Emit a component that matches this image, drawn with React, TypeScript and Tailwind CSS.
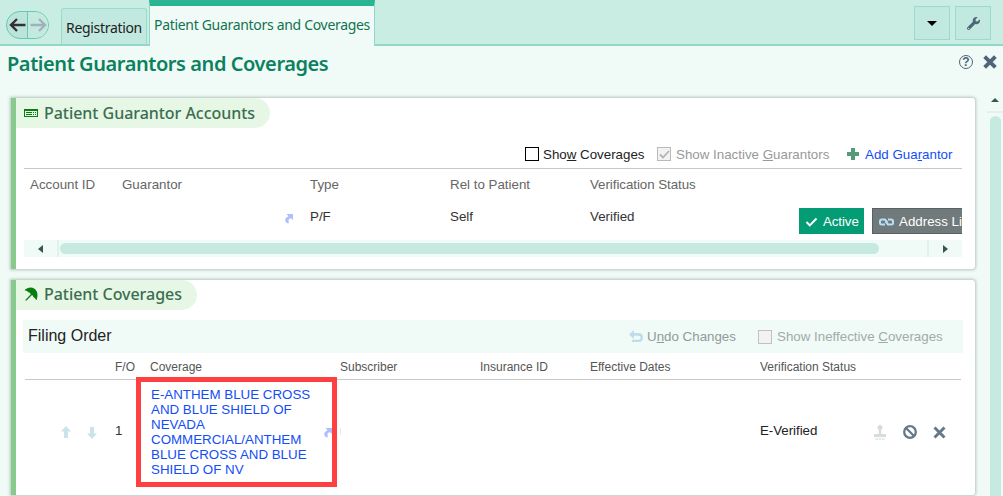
import type { ReactNode } from "react";

const ShortcutIcon = ({ className = "" }: { className?: string }) => (
  <svg className={`shrink-0 ${className}`} width="8" height="10" viewBox="0 0 8 10">
    <path d="M1.500 0H8V6L6 4.300C3.800 4.600 2.900 6 3.900 8.300L3.300 9.500C-.3 8.500-.8 5 2 3.300L3.500 2.200Z" fill="#aebffa" />
  </svg>
);

const CrossIcon = ({ size, color, width }: { size: number; color: string; width: number }) => (
  <svg className="shrink-0" width={size} height={size} viewBox="0 0 12 12">
    <path d="M1.400 1.400l9.200 9.200M10.600 1.400l-9.200 9.200" stroke={color} strokeWidth={width} />
  </svg>
);

function Card({ className, icon, title, titleClass, children }: { className: string; icon: ReactNode; title: string; titleClass: string; children: ReactNode }) {
  return (
    <section className={`ml-[11px] w-[964px] rounded-r-[3px] border-l-[5px] border-[#88c98c] bg-white shadow-[0_0_3px_1px_rgba(110,130,125,0.45)] ${className}`}>
      <h2 className={`flex h-[30px] items-center rounded-r-full bg-[#e6f7e6] pl-2 font-['Noto_Sans'] text-[16px] font-medium tracking-[-0.04px] whitespace-nowrap text-[#3b6e50] ${titleClass}`}>
        {icon}
        <span>{title}</span>
      </h2>
      {children}
    </section>
  );
}

export default function App() {
  return (
    <div className="flex h-[496px] w-[1003px] flex-col overflow-hidden bg-[#f0faf7] font-['Liberation_Sans',sans-serif] text-[13.33px] text-[#333]">
      <header className="flex h-[46px] shrink-0 border-b-2 border-[#92d8c5] bg-[#c9ede2]">
        <div className="mt-[11px] ml-[6px] flex h-[28px] w-[43px] overflow-hidden rounded-full border border-[#62cbb0] bg-[#bce4da]">
          <div className="flex w-[21px] items-center justify-center border-r border-[#62cbb0]">
            <svg width="17" height="14" viewBox="0 0 17 14" fill="none" stroke="#333" strokeWidth="2.4"><path d="M16.5 7H2M8 1L2 7l6 6" /></svg>
          </div>
          <div className="flex flex-1 items-center justify-center bg-[#c4eade]">
            <svg width="17" height="14" viewBox="0 0 17 14" fill="none" stroke="#9eb2bd" strokeWidth="2.4"><path d="M.5 7H15M9 1l6 6-6 6" /></svg>
          </div>
        </div>
        <div className="mt-2 ml-3 flex h-[36px] w-[86px] items-center justify-center rounded-t-[3px] border border-b-0 border-[#98dcca] bg-[#c1e9df] pt-[2px] font-['Noto_Sans'] text-[14px] tracking-[-0.32px] whitespace-nowrap text-[#222]">Registration</div>
        <div className="ml-[2px] flex h-[46px] w-[226px] shrink-0 justify-center border-x border-t-[6px] border-x-[#92d8c5] border-t-[#2ab592] bg-[#f0faf7] pt-[8px] font-['Noto_Sans'] text-[14px] tracking-[-0.31px] whitespace-nowrap text-[#13724f]">Patient Guarantors and Coverages</div>
        <div className="mt-[6px] mr-3 ml-auto flex h-[34px] gap-[5px]">
          <div className="flex w-9 items-center justify-center border border-[#98dcca] bg-[#c1e9df]">
            <svg width="10" height="5" viewBox="0 0 10 5"><path d="M0 0h10L5 5Z" fill="#000" /></svg>
          </div>
          <div className="flex w-9 items-center justify-center border border-[#98dcca] bg-[#c1e9df]">
            <svg width="13" height="13" viewBox="0 0 512 512" fill="#4f6578"><path d="M507.7 109.1c-2.2-9-13.5-12.1-20.1-5.5l-74.4 74.4-67.9-11.3L334 98.9l74.4-74.4c6.6-6.6 3.4-17.9-5.7-20.2-47.4-11.7-99.6.9-136.6 37.9-39.6 39.6-50.5 97.1-34.1 147.2L18.7 402.8c-25 25-25 65.5 0 90.5s65.5 25 90.5 0l213.2-213.2c50.1 16.7 107.5 5.7 147.4-34.2 37.1-37.1 49.7-89.3 37.9-136.8ZM64 472a24 24 0 1 1 0-48 24 24 0 0 1 0 48Z" /></svg>
          </div>
        </div>
      </header>

      <div className="flex h-[52px] shrink-0">
        <h1 className="mt-[3px] ml-[7px] font-['Noto_Sans'] text-[20px] leading-[30px] font-semibold tracking-[-0.43px] whitespace-nowrap text-[#0b8160]">Patient Guarantors and Coverages</h1>
        <div className="mt-[9px] mr-[6px] ml-auto flex h-[14px] items-center gap-[10px]">
          <div className="flex h-[14px] w-[14px] items-center justify-center rounded-full border border-[#4f6578] text-[12px] leading-none font-bold text-[#4f6578]">?</div>
          <CrossIcon size={14} color="#4f6578" width={3.3} />
        </div>
      </div>

      <div className="flex min-h-0 flex-1">
        <main className="w-[987px] shrink-0">
          <Card
            className="h-[171px]"
            title="Patient Guarantor Accounts"
            titleClass="w-[254px]"
            icon={
              <svg className="mr-[6px] shrink-0" width="14" height="8" viewBox="0 0 14 8" fill="none" stroke="#087d12" shapeRendering="crispEdges">
                <path d="M.5 .5h13v7H.5ZM1 1.5h12M2 3.5h6M2 5.5h6M9 3.5h1M11 3.5h1M9 5.5h1M11 5.5h1" />
              </svg>
            }
          >
            <div className="mr-[13px] ml-2 flex h-[41px] items-end border-b border-[#c8c8c8] pb-[7px] leading-[15px] whitespace-nowrap">
              <span className="ml-[501px] h-[14px] w-[14px] border border-black bg-white" />
              <span className="-mb-px ml-1 w-[114px] text-[#222]">Sho<u>w</u> Coverages</span>
              <span className="flex h-[14px] w-[14px] items-center justify-center border border-[#bababa] bg-[#f2f2f2]">
                <svg width="11" height="9" viewBox="0 0 11 9"><path d="M1 4.5l3 3L10 1" fill="none" stroke="#b4b4b4" strokeWidth="1.8" /></svg>
              </span>
              <span className="-mb-px ml-[5px] w-[171px] text-[#999]">Show Inactive <u>G</u>uarantors</span>
              <svg className="mb-[1px] shrink-0" width="12" height="12" viewBox="0 0 12 12"><path d="M4 0h4v4h4v4H8v4H4V8H0V4h4Z" fill="#559b75" /></svg>
              <span className="-mb-px ml-[6px] text-[#124ef5]">Add Gua<u>r</u>antor</span>
            </div>
            <div className="ml-[14px] flex h-[30px] items-center pt-[2px] whitespace-nowrap text-[#666]">
              <span className="w-[92px]">Account ID</span>
              <span className="w-[188px]">Guarantor</span>
              <span className="w-[140px]">Type</span>
              <span className="w-[140px]">Rel to Patient</span>
              <span className="tracking-[-0.05px]">Verification Status</span>
            </div>
            <div className="mr-[13px] ml-2 flex h-[41px] pt-[9px] whitespace-nowrap">
              <ShortcutIcon className="mt-[6px] ml-[261px]" />
              <span className="mt-px ml-[17px] w-[140px] shrink-0 leading-[15px]">P/F</span>
              <span className="mt-px w-[140px] shrink-0 leading-[15px]">Self</span>
              <span className="mt-px w-[209px] shrink-0 leading-[15px]">Verified</span>
              <span className="flex h-[26px] w-[65px] shrink-0 items-center bg-[#049c75] pt-px pl-[6px] tracking-[-0.1px] text-white">
                <svg className="mr-[5px] shrink-0" width="13" height="10" viewBox="0 0 12 10"><path d="M1 5l3.3 3.4L11 1.5" fill="none" stroke="#fff" strokeWidth="2" /></svg>
                Active
              </span>
              <span className="ml-2 flex h-[26px] w-[90px] shrink-0 items-center border border-r-0 border-[#596164] bg-[#707a7b] pt-px pl-[6px] text-white">
                <svg className="mr-[5px] shrink-0" width="15" height="8" viewBox="0 0 15 8" fill="none" stroke="#b5e0f5" strokeWidth="2"><path d="M6 6.500H3Q1 6.500 1 5V3Q1 1.500 3 1.500H6L8.500 4.500M9 1.500H12Q14 1.500 14 3V5Q14 6.500 12 6.500H9L6.500 3.500" /></svg>
                Address Li
              </span>
            </div>
            <div className="mr-[13px] ml-2 flex h-[17px] items-center bg-[#f0faf7]">
              <div className="flex h-[17px] w-[35px] items-center justify-center border-r-2 border-[#e0f2ec]"><svg width="5" height="8" viewBox="0 0 5 8"><path d="M5 0v8L0 4Z" fill="#35594e" /></svg></div>
              <div className="ml-[1px] h-[11px] w-[819px] rounded-full bg-[#c6eadf]" />
              <div className="ml-auto flex h-[17px] w-[35px] items-center justify-center border-l-2 border-[#e0f2ec]"><svg width="5" height="8" viewBox="0 0 5 8"><path d="M0 0v8L5 4Z" fill="#35594e" /></svg></div>
            </div>
          </Card>

          <Card
            className="mt-[11px] h-[215px]"
            title="Patient Coverages"
            titleClass="w-[181px] pb-[2px]"
            icon={
              <svg className="mr-[6px] shrink-0" width="14" height="14" viewBox="0 0 14 14">
                <path d="M.8 2.800Q6-1.200 10.500 1.800Q15 5.500 12.700 13L11.800 12.500Q11 10.600 9.500 10.200Q9.200 8.300 7 7.500Q6 5.200 4.300 5.200Q3.500 3.500 1 3.500Z" fill="#087d12" />
                <path d="M8 7L2.500 12.800L1.500 13.200" fill="none" stroke="#087d12" strokeWidth="1.300" />
              </svg>
            }
          >
            <div className="mt-[10px] mr-3 ml-[7px] flex h-[33px] items-center bg-[#f0faf7] whitespace-nowrap">
              <span className="ml-[5px] w-[601px] -translate-y-px text-[16px] leading-[18px] text-[#222]">Filing Order</span>
              <svg width="14" height="13" viewBox="0 0 14 13"><path d="M0 4.500L5 0v3h4.500Q14 3 14 7.500T9.500 12H3v-2.200h6Q11.700 9.800 11.700 7.700T9 5.700H5V9Z" fill="#bfdcea" /></svg>
              <span className="mt-px ml-1 w-[111px] text-[#929b97]">U<u>n</u>do Changes</span>
              <span className="h-[14px] w-[14px] border border-[#c1c1c1] bg-[#f2f2f2]" />
              <span className="mt-px ml-[5px] text-[#a3aaa7]">Show Ineffective <u>C</u>overages</span>
            </div>
            <div className="mr-[14px] ml-[9px] flex h-[27px] items-center border-b border-[#c8c8c8] pt-px text-[12px] whitespace-nowrap text-[#555]">
              <span className="ml-[90px] w-[35px]">F/O</span>
              <span className="w-[190px]">Coverage</span>
              <span className="w-[140px]">Subscriber</span>
              <span className="w-[110px]">Insurance ID</span>
              <span className="w-[170px]">Effective Dates</span>
              <span>Verification Status</span>
            </div>
            <div className="relative flex h-[106px]">
              <div className="absolute top-[-3px] left-[120px] h-[110px] w-[201px] border-[5px] border-[#ff4040]" />
              <svg className="mt-[46px] ml-[45px] shrink-0" width="10" height="12" viewBox="0 0 10 12"><path d="M5 0l5 5.500H7V12H3V5.500H0Z" fill="#cde3eb" /></svg>
              <svg className="mt-[47px] ml-[16px] shrink-0" width="10" height="12" viewBox="0 0 10 12"><path d="M5 12l5-5.500H7V0H3v6.500H0Z" fill="#cde3eb" /></svg>
              <span className="mt-[43px] ml-[18px] w-[36px] shrink-0 leading-[15px]">1</span>
              <p className="mt-[7px] w-[173px] shrink-0 leading-[15px] whitespace-nowrap text-[#124ef5]">E-ANTHEM BLUE CROSS<br />AND BLUE SHIELD OF<br />NEVADA<br />COMMERCIAL/ANTHEM<br />BLUE CROSS AND BLUE<br />SHIELD OF NV</p>
              <ShortcutIcon className="mt-[48px]" />
              <span className="mt-[48px] ml-[8px] h-[7px] w-px bg-[#e8e8e8]" />
              <span className="mt-[43px] ml-[419px] w-[113px] shrink-0 leading-[15px] tracking-[-0.05px] text-[#222]">E-Verified</span>
              <div className="mt-[44px] flex h-4 items-center gap-4">
                <svg width="14" height="15" viewBox="0 0 14 15" fill="#d5dcdd"><path d="M7 0a2.800 2.800 0 0 1 2.500 3.500L8.200 5v4H13v3H1V9h4.800V5L4.500 3.500A2.800 2.800 0 0 1 7 0ZM2 13.500h10v1H2Z" /></svg>
                <svg width="14" height="14" viewBox="0 0 14 14" fill="none" stroke="#65788a" strokeWidth="2.300"><circle cx="7" cy="7" r="5.800" /><path d="M3 3l8 8" /></svg>
                <CrossIcon size={13} color="#65788a" width={2.7} />
              </div>
            </div>
          </Card>
        </main>
        <aside className="h-full flex-1 overflow-hidden">
          <div className="flex h-[15px] justify-center border-b-2 border-[#e0f2ec]"><svg width="8" height="4" viewBox="0 0 8 4"><path d="M0 4L4 0l4 4Z" fill="#35594e" /></svg></div>
          <div className="mt-[3px] ml-[3px] h-[400px] w-[11px] rounded-t-full bg-[#c6eadf]" />
        </aside>
      </div>
    </div>
  );
}
